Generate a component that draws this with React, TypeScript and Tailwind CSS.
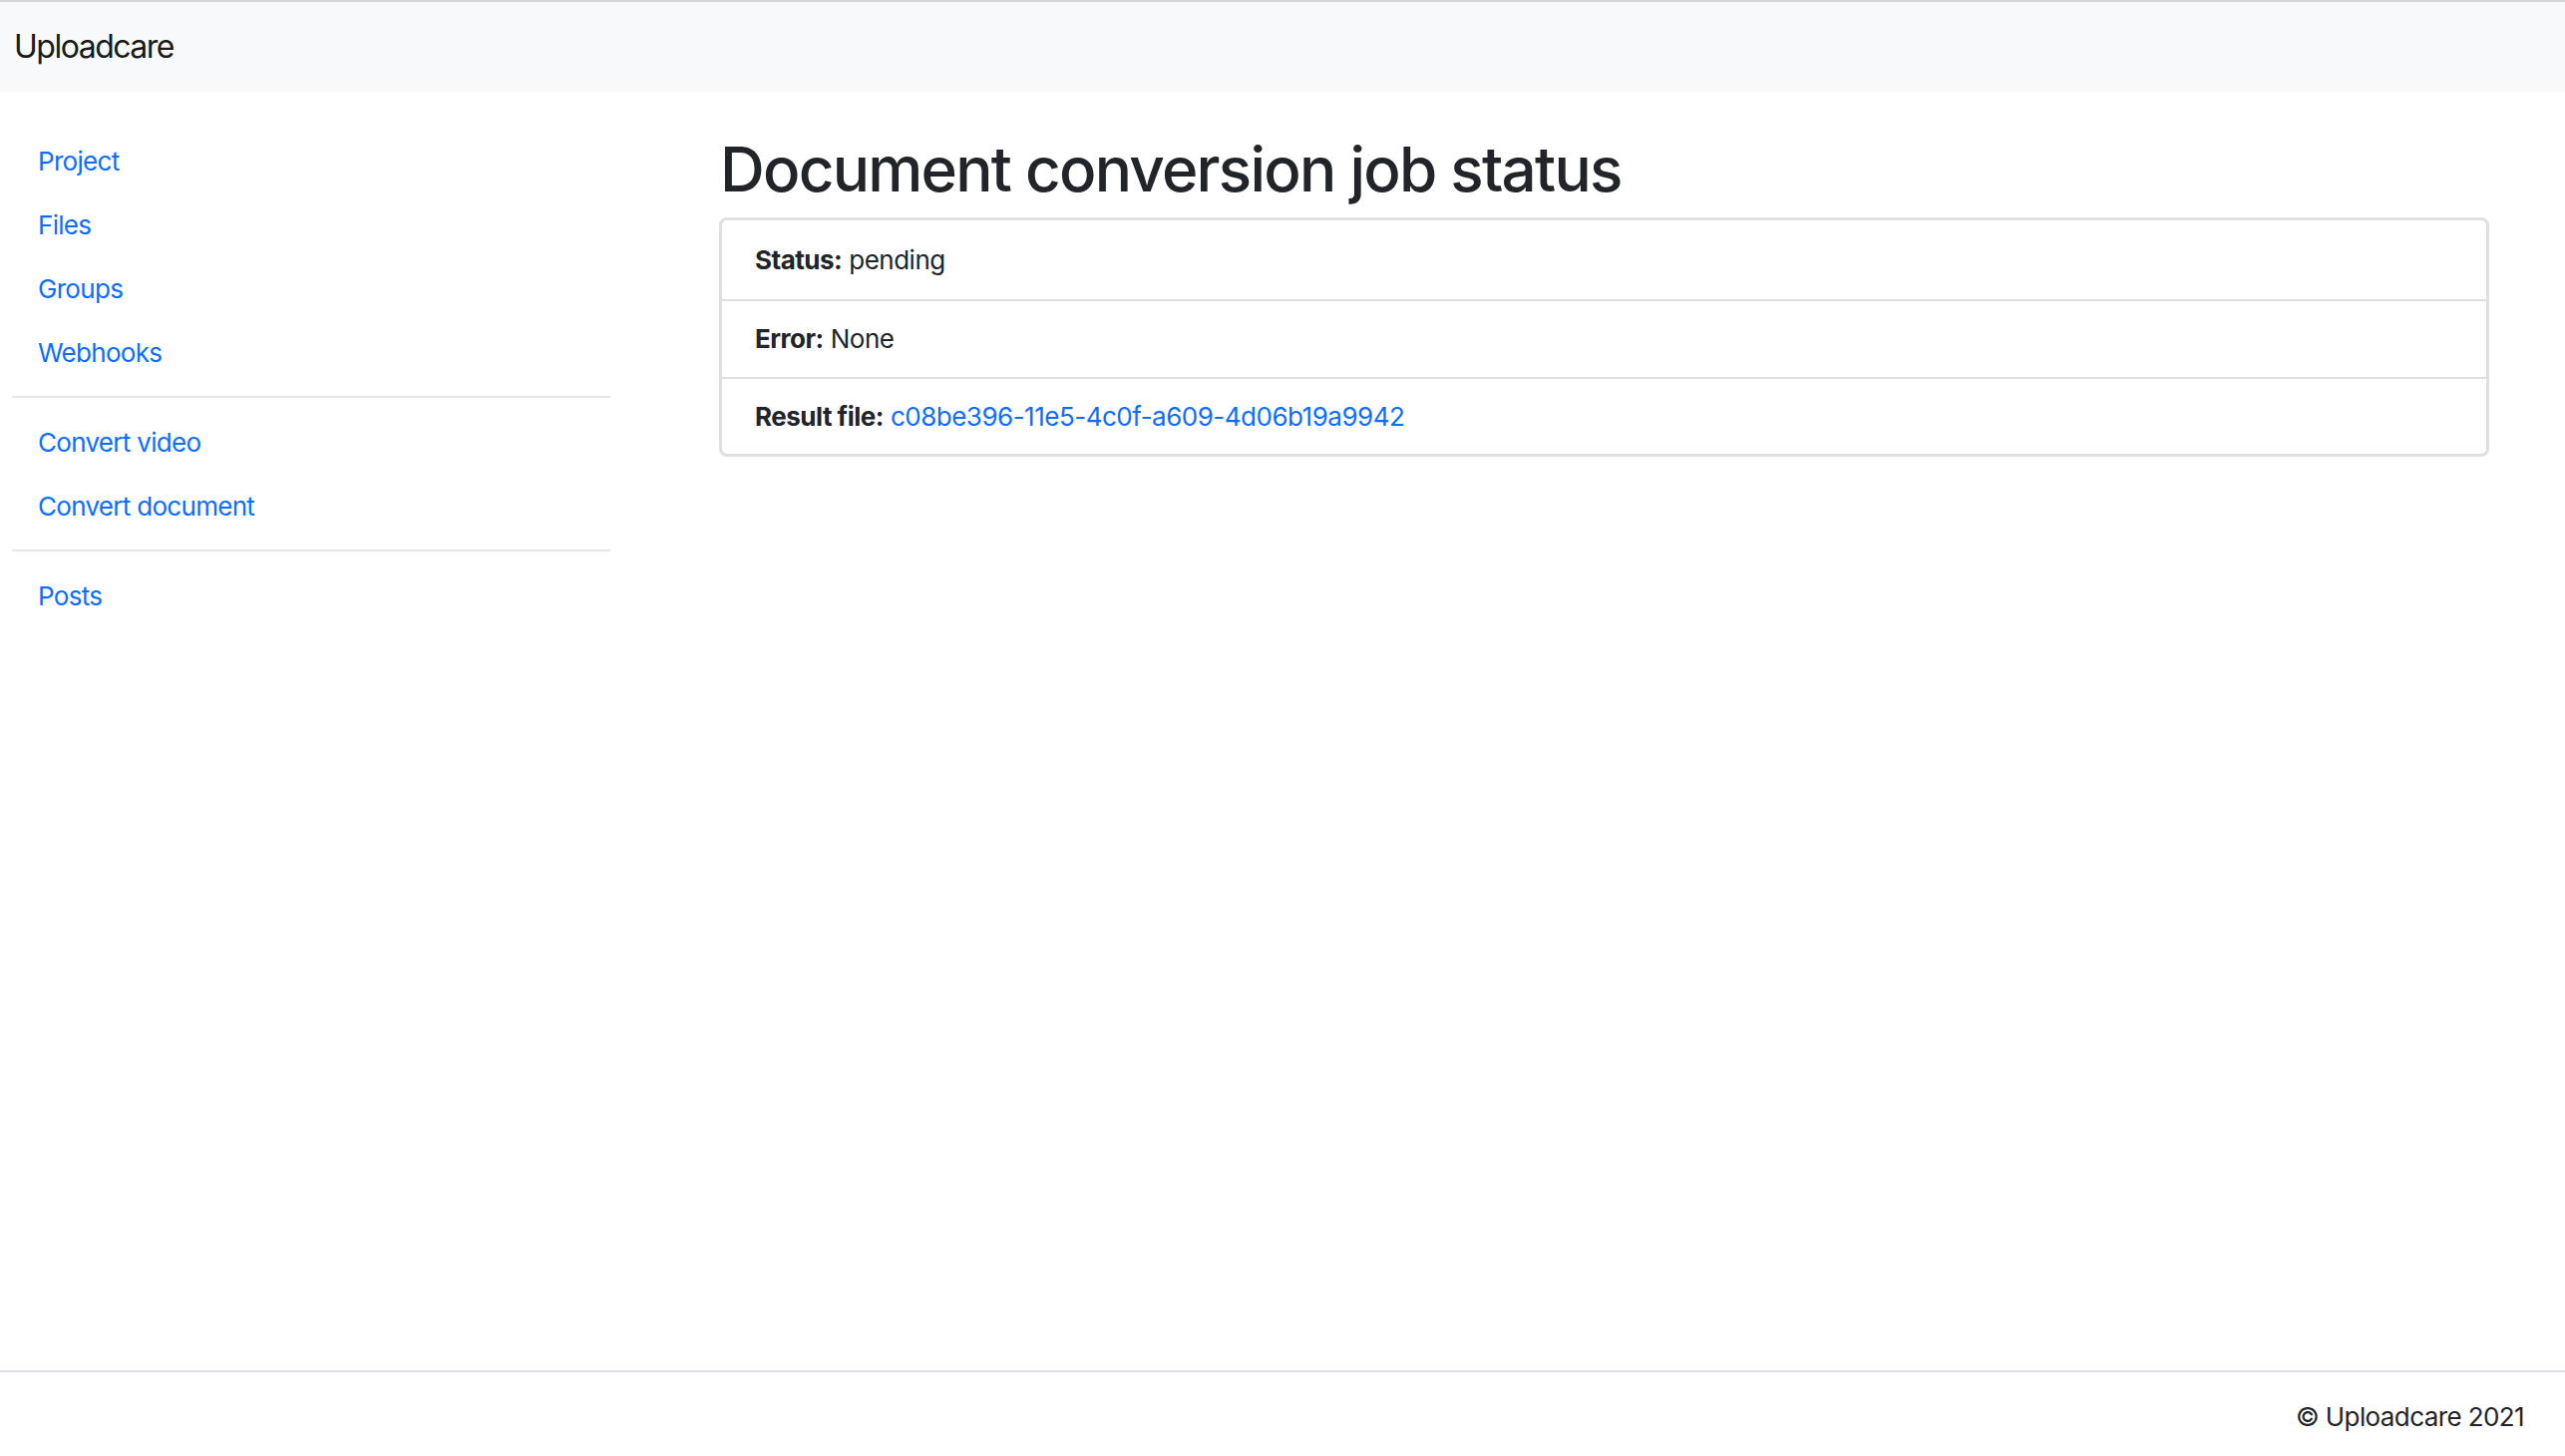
import React from "react";

const links1 = ["Project", "Files", "Groups", "Webhooks"];
const links2 = ["Convert video", "Convert document"];
const links3 = ["Posts"];

function NavLink({ label }: { label: string }) {
  return (
    <a
      href="#"
      className="flex h-[64px] items-center px-[26px] text-[26px] tracking-[-0.7px] text-[#0d6efd] no-underline"
    >
      {label}
    </a>
  );
}

export default function App() {
  return (
    <div
      className="flex h-[1460px] w-full flex-col bg-white text-[#212529]"
      style={{ fontFamily: "Inter, 'Noto Sans', sans-serif" }}
    >
      <header className="flex h-[92px] shrink-0 items-center border-t-2 border-[#d6d6d6] bg-[#f8f9fa] pl-[14px]">
        <span className="text-[32px] leading-none tracking-[-1.5px] text-[#1a1a1a]">Uploadcare</span>
      </header>

      <div className="flex flex-1">
        <aside className="ml-[12px] w-[600px] shrink-0 pt-[37px]">
          {links1.map((l) => (
            <NavLink key={l} label={l} />
          ))}
          <div className="my-[12px] h-[2px] bg-[#e6e7e9]" />
          {links2.map((l) => (
            <NavLink key={l} label={l} />
          ))}
          <div className="my-[12px] h-[2px] bg-[#e6e7e9]" />
          {links3.map((l) => (
            <NavLink key={l} label={l} />
          ))}
        </aside>

        <main className="ml-[109px] w-[1775px] pt-[39px]">
          <h1 className="mb-[10px] h-[77px] pl-[1px] text-[62px] font-medium leading-[77px] tracking-[-1.75px]">
            Document conversion job status
          </h1>
          <div className="rounded-[8px] border-[3px] border-[#dfdfdf] text-[26px] tracking-[-0.5px]">
            <div className="flex h-[79px] items-center pl-[33px]">
              <span className="font-bold">Status:</span>
              <span className="ml-[7px]">pending</span>
            </div>
            <div className="flex h-[78px] items-center border-t-2 border-[#dfdfdf] pb-[2px] pl-[33px]">
              <span className="font-bold">Error:</span>
              <span className="ml-[7px]">None</span>
            </div>
            <div className="flex h-[77px] items-center border-t-2 border-[#dfdfdf] pl-[33px]">
              <span className="font-bold">Result file:</span>
              <a href="#" className="ml-[7px] text-[#0d6efd]">
                c08be396-11e5-4c0f-a609-4d06b19a9942
              </a>
            </div>
          </div>
        </main>
      </div>

      <footer className="flex h-[86px] shrink-0 items-center justify-end border-t-2 border-[#dee2e6] pr-[41px] pt-[4px]">
        <span className="text-[26px] tracking-[-0.6px]">© Uploadcare 2021</span>
      </footer>
    </div>
  );
}
